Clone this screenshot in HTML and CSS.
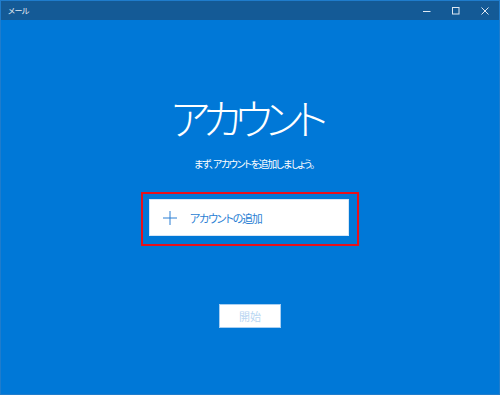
FILE: index.html
```html
<!DOCTYPE html>
<html lang="ja">
<head>
<meta charset="utf-8">
<link rel="stylesheet" href="styles.css">
</head>
<body>
<div class="window">
  <div class="titlebar">
    <span class="app-name">メール</span>
    <div class="controls">
      <span class="ctl">
        <svg width="8" height="8" viewBox="0 0 8 8"><path d="M0 4.5H7.5" stroke="#dfe8f2" stroke-width="1"/></svg>
      </span>
      <span class="ctl">
        <svg width="8" height="8" viewBox="0 0 8 8"><rect x="0.5" y="0.5" width="6.5" height="6.5" fill="none" stroke="#dfe8f2" stroke-width="1"/></svg>
      </span>
      <span class="ctl">
        <svg width="8" height="8" viewBox="0 0 8 8"><path d="M0.5 0.5L7.5 7.5M7.5 0.5L0.5 7.5" stroke="#dfe8f2" stroke-width="1"/></svg>
      </span>
    </div>
  </div>
  <div class="content">
    <h1 class="heading">アカウント</h1>
    <p class="lead">まず、アカウントを追加しましょう。</p>
    <div class="highlight">
      <div class="add-account">
        <svg class="plus" width="14" height="14" viewBox="0 0 14 14"><path d="M7 0V14M0 7H14" stroke="#2b7fd4" stroke-width="1"/></svg>
        <span class="add-label">アカウントの追加</span>
      </div>
    </div>
    <div class="start">開始</div>
  </div>
</div>
</body>
</html>
```
FILE: styles.css
```css
* { box-sizing: border-box; }
html, body { margin: 0; padding: 0; }
body {
  width: 500px;
  height: 395px;
  overflow: hidden;
  font-family: "Noto Sans CJK JP", "Noto Sans", sans-serif;
  font-feature-settings: "palt";
}
.window {
  width: 500px;
  height: 395px;
  border: 1px solid #1f7ccc;
  background: #0078d7;
  display: flex;
  flex-direction: column;
}
.titlebar {
  height: 19px;
  background: #145a96;
  display: flex;
  align-items: center;
  justify-content: space-between;
  color: #e8eef5;
}
.app-name {
  font-size: 8px;
  padding-left: 7px;
  letter-spacing: -0.5px;
}
.controls {
  display: flex;
  height: 100%;
}
.ctl {
  width: 29px;
  display: flex;
  align-items: center;
  justify-content: center;
}
.content {
  flex: 1;
  display: flex;
  flex-direction: column;
  align-items: center;
}
.heading {
  margin: 73px 0 0 -8px;
  font-size: 42px;
  font-weight: 200;
  line-height: 48px;
  color: #fff;
  letter-spacing: -7px;
}
.lead {
  margin: 16px 0 0 8px;
  font-size: 10px;
  line-height: 14px;
  color: #fff;
  letter-spacing: -1.3px;
}
.highlight {
  margin-top: 21px;
  width: 218px;
  height: 54px;
  border: 2px solid #e8101a;
  padding: 5px 8px 8px 6px;
}
.add-account {
  height: 100%;
  background: #fff;
  border: 1px solid #d4e6f7;
  display: flex;
  align-items: center;
  padding-left: 13px;
}
.plus { flex: none; }
.add-label {
  margin-left: 13px;
  font-size: 11px;
  color: #2b7fd4;
  letter-spacing: -1.2px;
}
.start {
  margin-top: 58px;
  width: 62px;
  height: 24px;
  background: #fff;
  border: 1px solid #a8cff2;
  display: flex;
  align-items: center;
  justify-content: center;
  font-size: 11px;
  color: #b9d6f2;
}
```
